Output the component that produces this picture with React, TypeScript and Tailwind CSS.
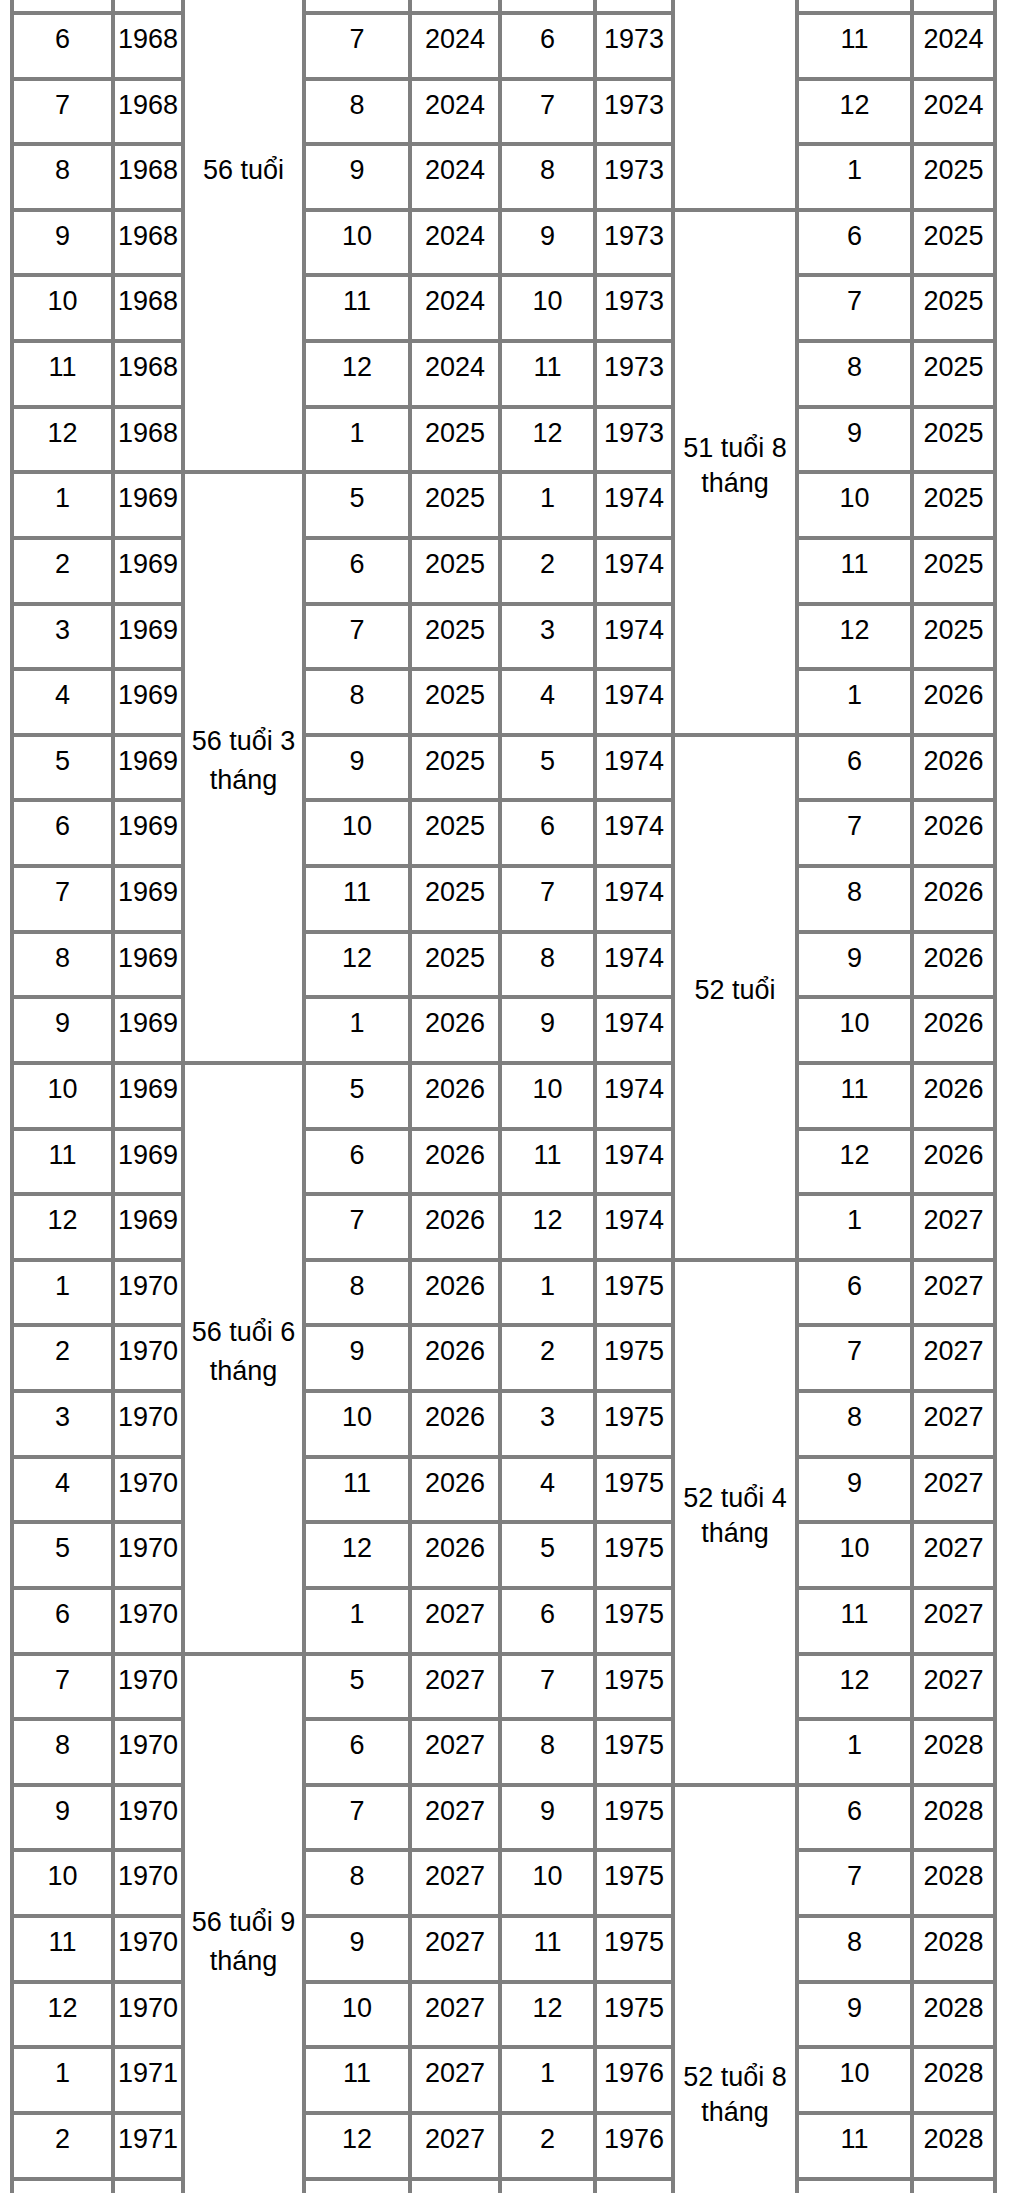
import React from "react";

interface AgeGroup {
  start: number;
  span: number;
  months: number;
  label: string;
  pad?: string;
}

// Rows are indexed so that row 1 is the first full row on screen (born 6/1968).
const FIRST_ROW = -1;
const LAST_ROW = 34;

const leftGroups: AgeGroup[] = [
  { start: -1, span: 9, months: 672, label: "56 tuổi" },
  { start: 8, span: 9, months: 675, label: "56 tuổi 3 tháng" },
  { start: 17, span: 9, months: 678, label: "56 tuổi 6 tháng" },
  { start: 26, span: 9, months: 681, label: "56 tuổi 9 tháng" },
];

const rightGroups: AgeGroup[] = [
  { start: -1, span: 5, months: 616, label: "" },
  { start: 4, span: 8, months: 620, label: "51 tuổi 8 tháng" },
  { start: 12, span: 8, months: 624, label: "52 tuổi" },
  { start: 20, span: 8, months: 628, label: "52 tuổi 4 tháng" },
  { start: 28, span: 10, months: 632, label: "52 tuổi 8 tháng", pad: "pb-[35px]" },
];

const spanClass: Record<number, string> = {
  5: "row-span-5",
  8: "row-span-8",
  9: "row-span-9",
  10: "row-span-10",
};

const findGroup = (groups: AgeGroup[], row: number) =>
  groups.find((g) => row >= g.start && row < g.start + g.span)!;

// month index counted from year 0
const toDate = (t: number) => ({ month: (t % 12) + 1, year: Math.floor(t / 12) });

const Cell: React.FC<{ children: React.ReactNode }> = ({ children }) => (
  <div className="bg-white pt-[5px] text-center leading-[39px] whitespace-nowrap">{children}</div>
);

const AgeCell: React.FC<{ group: AgeGroup; lead: string }> = ({ group, lead }) => (
  <div
    className={`${spanClass[group.span]} flex items-center justify-center bg-white px-0.5 text-center ${group.pad ?? "pb-[13px]"} ${lead}`}
  >
    {group.label}
  </div>
);

const App: React.FC = () => {
  const cells: React.ReactNode[] = [];

  for (let row = FIRST_ROW; row <= LAST_ROW; row++) {
    const birthLeft = 1968 * 12 + 4 + row;
    const birthRight = birthLeft + 60;
    const lg = findGroup(leftGroups, row);
    const rg = findGroup(rightGroups, row);
    const bl = toDate(birthLeft);
    const br = toDate(birthRight);
    const rl = toDate(birthLeft + lg.months + 1);
    const rr = toDate(birthRight + rg.months + 1);

    cells.push(<Cell key={`a${row}`}>{bl.month}</Cell>);
    cells.push(<Cell key={`b${row}`}>{bl.year}</Cell>);
    if (row === lg.start) {
      cells.push(<AgeCell key={`c${row}`} group={lg} lead="leading-[39px]" />);
    }
    cells.push(<Cell key={`d${row}`}>{rl.month}</Cell>);
    cells.push(<Cell key={`e${row}`}>{rl.year}</Cell>);
    cells.push(<Cell key={`f${row}`}>{br.month}</Cell>);
    cells.push(<Cell key={`g${row}`}>{br.year}</Cell>);
    if (row === rg.start) {
      cells.push(<AgeCell key={`h${row}`} group={rg} lead="leading-[35px]" />);
    }
    cells.push(<Cell key={`i${row}`}>{rr.month}</Cell>);
    cells.push(<Cell key={`j${row}`}>{rr.year}</Cell>);
  }

  return (
    <div className="h-[2193px] w-full overflow-hidden bg-white font-['Liberation_Sans',Arial,sans-serif] text-[27px] text-black">
      <div className="-mt-[120.28px] ml-[10px] grid w-[987px] grid-cols-[97px_66px_117px_102px_86px_91px_74px_120px_111px_79px] auto-rows-[61.64px] gap-[4px] bg-[#7f7f7f] p-[4px]">
        {cells}
      </div>
    </div>
  );
};

export default App;
